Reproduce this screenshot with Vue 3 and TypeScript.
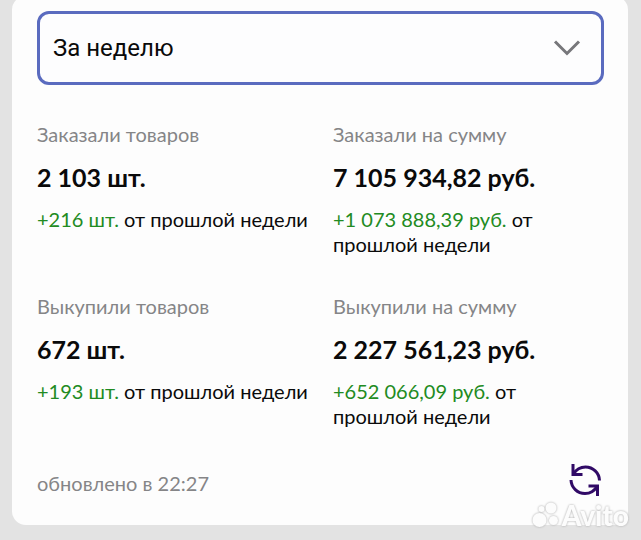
<script setup lang="ts">
import { ref } from 'vue'

interface Stat {
  label: string
  value: string
  delta: string
}

const periods: string[] = ['За неделю']
const period = ref<string>(periods[0])

const stats: Stat[] = [
  { label: 'Заказали товаров', value: '2 103 шт.', delta: '+216 шт.' },
  { label: 'Заказали на сумму', value: '7 105 934,82 руб.', delta: '+1 073 888,39 руб.' },
  { label: 'Выкупили товаров', value: '672 шт.', delta: '+193 шт.' },
  { label: 'Выкупили на сумму', value: '2 227 561,23 руб.', delta: '+652 066,09 руб.' },
]

const updatedAt = ref<string>('22:27')
</script>

<template>
  <main class="page">
    <section class="card">
      <div class="picker">
        <select v-model="period" class="picker-select" aria-label="Период">
          <option v-for="p in periods" :key="p" :value="p">{{ p }}</option>
        </select>
        <svg class="chevron" viewBox="0 0 28 18" aria-hidden="true">
          <path d="M2 2.5 14 14.5 26 2.5" fill="none" stroke="#77777b" stroke-width="3" />
        </svg>
      </div>

      <div class="stats">
        <article v-for="s in stats" :key="s.label" class="stat">
          <p class="label">{{ s.label }}</p>
          <p class="value">{{ s.value }}</p>
          <p class="change"><span class="delta">{{ s.delta }}</span> от прошлой недели</p>
        </article>
      </div>

      <footer class="footer">
        <p class="label">обновлено в {{ updatedAt }}</p>
        <button class="refresh" type="button" aria-label="Обновить">
          <svg viewBox="0 0 32 32" aria-hidden="true">
            <g fill="none" stroke="#300a66" stroke-width="3">
              <path d="M4 0V10.500H13.500" />
              <path d="M4.500 10C7.500 5 12 3 16.500 3A14 14 0 0 1 30.500 16.500" />
              <path d="M28.500 32V22H19.500" />
              <path d="M28 22.500C25 27.500 20.500 29.500 16 29.500A14 14 0 0 1 2 16" />
            </g>
          </svg>
        </button>
      </footer>
    </section>

    <div class="watermark">
      <svg class="dots" viewBox="0 0 28 26" aria-hidden="true">
        <circle cx="7.500" cy="18" r="7" />
        <circle cx="9.500" cy="7" r="3" />
        <circle cx="19" cy="6" r="5.500" />
        <circle cx="21.500" cy="18.500" r="4.500" />
      </svg>
      <span>Avito</span>
    </div>
  </main>
</template>

<style>
body {
  margin: 0;
  background: #e3e3e3;
}
</style>

<style scoped>
.page {
  position: relative;
  padding: 0 13px 15px 12px;
  font-family: Lato, Carlito, 'Open Sans', sans-serif;
  color: #0a0a0a;
}

.card {
  margin-top: -4px;
  padding: 15px 24px 29px 25px;
  border-radius: 14px;
  background: #fdfdfd;
}

.picker {
  position: relative;
}

.picker-select {
  display: block;
  box-sizing: border-box;
  width: 100%;
  height: 74px;
  padding: 0 60px 0 13px;
  border: 3px solid #5a6bbf;
  border-radius: 12px;
  outline: none;
  appearance: none;
  background: #fdfdfe;
  color: #0a0a0a;
  font-family: Roboto, sans-serif;
  font-size: 24px;
}

.chevron {
  position: absolute;
  top: 28px;
  right: 23px;
  width: 28px;
  height: 18px;
  pointer-events: none;
}

.stats {
  display: grid;
  grid-template-columns: 276px 1fr;
  column-gap: 20px;
  row-gap: 36px;
  margin-top: 36px;
}

.label,
.value,
.change {
  margin: 0;
}

.label {
  font-size: 20px;
  line-height: 26px;
  color: #858587;
}

.value {
  margin-top: 14px;
  font-size: 25px;
  line-height: 32px;
  font-weight: 700;
}

.change {
  margin-top: 14px;
  font-size: 20px;
  line-height: 25px;
}

.delta {
  color: #228b22;
}

.footer {
  display: flex;
  align-items: flex-end;
  justify-content: space-between;
  margin-top: 35px;
  padding-right: 3px;
}

.refresh {
  padding: 0;
  border: 0;
  background: none;
  cursor: pointer;
}

.refresh svg {
  display: block;
  width: 32px;
  height: 32px;
}

.watermark {
  position: absolute;
  right: 12px;
  bottom: 9px;
  display: flex;
  align-items: center;
  gap: 2px;
  font-size: 28px;
  line-height: 32px;
  font-weight: 900;
  color: #fcfcfc;
  filter: drop-shadow(0 0 1px #a8a8a8);
  pointer-events: none;
}

.dots {
  width: 28px;
  height: 26px;
  fill: #fcfcfc;
}
</style>
